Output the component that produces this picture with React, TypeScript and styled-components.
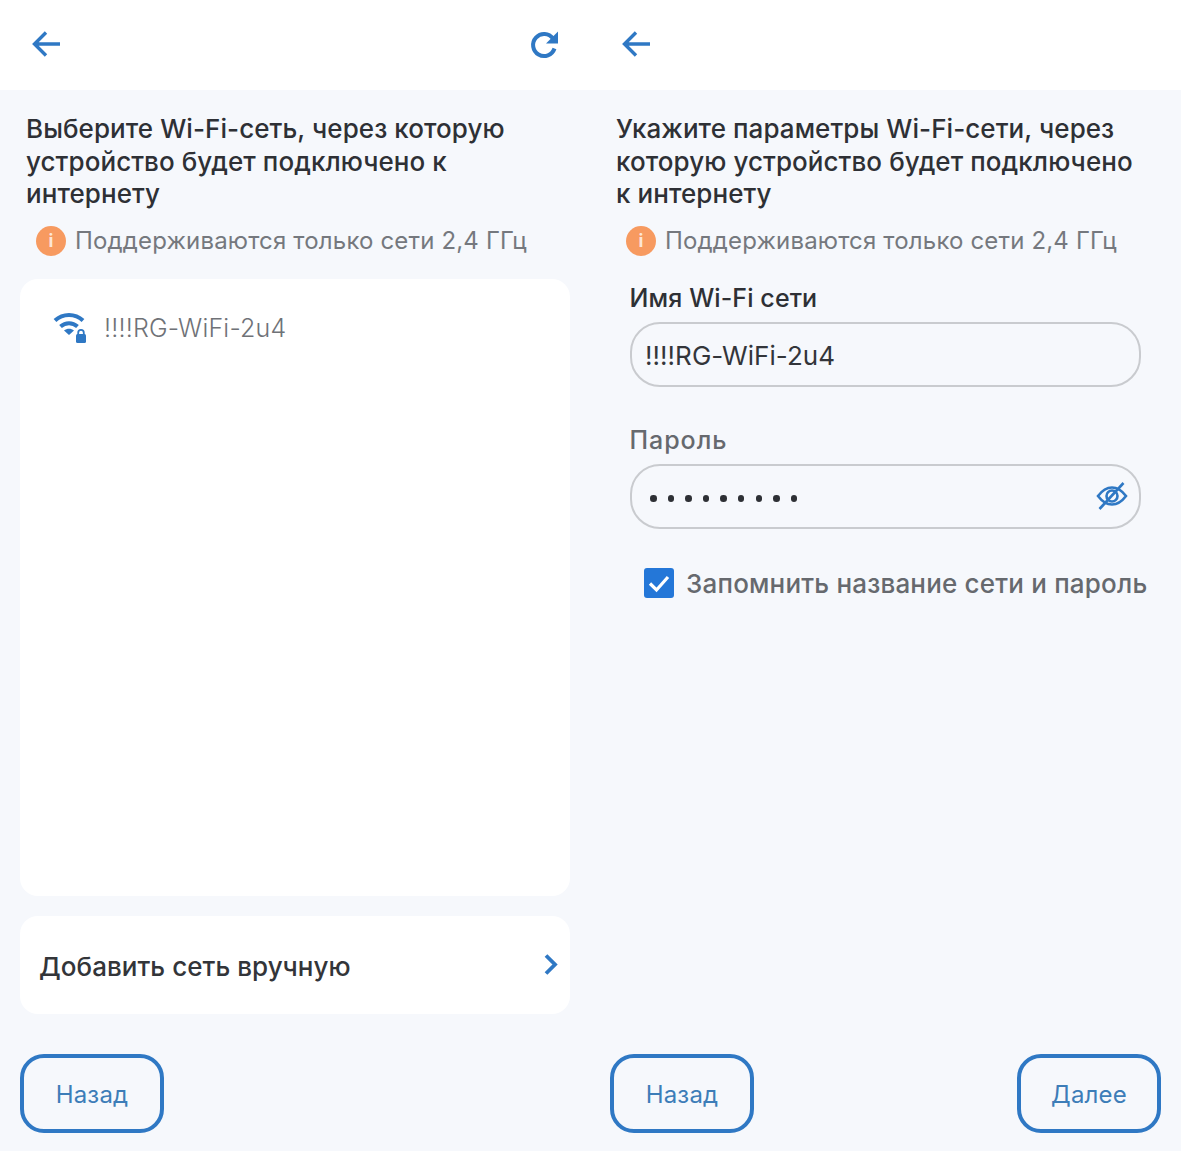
import React from 'react';
import styled, { createGlobalStyle } from 'styled-components';

const Global = createGlobalStyle`
  html, body { margin: 0; padding: 0; background: #f6f8fc; }
  body { font-family: Inter, "Noto Sans", sans-serif; }
  * { box-sizing: border-box; }
`;
const Page = styled.div`display: grid; grid-template-columns: 590px 591px; width: 1181px; height: 1151px; overflow: hidden;`;
const Panel = styled.section`display: flex; flex-direction: column; height: 1151px; background: #f6f8fc;`;
const Header = styled.header`display: flex; align-items: center; justify-content: space-between; height: 90px; padding: 0 30px 1px 31px; background: #fff; color: #2f78c4;`;
const Body = styled.div`flex: 1; display: flex; flex-direction: column; padding: 23px 20px 18px 20px; min-height: 0;`;
const Title = styled.h1`margin: 0 0 0 6px; font-size: 26px; line-height: 32.5px; font-weight: 500; letter-spacing: 0.07px; color: #2e3035;`;
const Note = styled.div`display: flex; align-items: center; gap: 9px; margin: 14px 0 0 16px; height: 32px; font-size: 24px; letter-spacing: 0.16px; color: #75787e;`;
const InfoDot = styled.span`flex: none; width: 30px; height: 30px; border-radius: 50%; background: #f79a60; color: #fde6d6; display: flex; align-items: center; justify-content: center; font-size: 18px; font-weight: 700;`;
const ListCard = styled.div`flex: 1; margin-top: 22px; background: #fff; border-radius: 18px; padding: 31px 0 0 32px;`;
const NetRow = styled.div`display: flex; align-items: center; gap: 16px; height: 36px; font-size: 25px; font-weight: 300; letter-spacing: 0.2px; color: #6f7277;`;
const ManualCard = styled.div`display: flex; align-items: center; justify-content: space-between; height: 98px; margin-top: 20px; padding: 0 9px 0 19px; background: #fff; border-radius: 18px; color: #2f78c4;`;
const ManualText = styled.span`padding-top: 2px; font-size: 26px; font-weight: 500; letter-spacing: 0.05px; color: #333539;`;
const Footer = styled.div`display: flex; justify-content: space-between; margin-top: 40px;`;
const OutlineButton = styled.button`width: 144px; height: 79px; border: 4px solid #2f78c4; border-radius: 24px; background: transparent; color: #3d7db8; font-family: inherit; font-size: 24px; letter-spacing: 0.2px; padding: 2px 0 0;`;
const Spacer = styled.div`flex: 1;`;
const Field = styled.div<{ $top: number }>`display: flex; flex-direction: column; margin: ${p => p.$top}px 0 0 19.500px; width: 511.500px;`;
const Label = styled.label<{ $strong?: boolean }>`font-size: 25px; line-height: 32px; letter-spacing: ${p => (p.$strong ? '0.1px' : '0.95px')}; font-weight: 500; color: ${p => (p.$strong ? '#2e3035' : '#66696e')};`;
const InputBox = styled.div`display: flex; align-items: center; justify-content: space-between; height: 65px; margin-top: 8px; padding: 3px 11px 0 13.500px; border: 2px solid #c9cbcf; border-radius: 30px; font-size: 26px; letter-spacing: 0.05px; color: #33353a;`;
const Dots = styled.span`display: flex; gap: 11.100px; padding: 2px 0 0 5px;`;
const Dot = styled.i`display: block; width: 6.500px; height: 6.500px; border-radius: 50%; background: #2e3035;`;
const Eye = styled.span`display: flex; margin-top: -3px;`;
const Remember = styled.div`display: flex; align-items: center; gap: 12px; margin: 39px 0 0 34px; font-size: 26px; font-weight: 500; letter-spacing: 0.19px; color: #66696e; white-space: nowrap;`;
const Check = styled.span`flex: none; width: 30px; height: 30px; border-radius: 3px; background: #2477d8; display: flex; align-items: center; justify-content: center;`;

const Arrow = () => (
  <svg width="30" height="30" viewBox="0 0 30 30" fill="none" stroke="currentColor" strokeWidth="3.400">
    <path d="M4 14h25M15 2.500 3.500 14 15 25.500" />
  </svg>
);
const Refresh = () => (
  <svg width="30" height="30" viewBox="0 0 30 30" fill="none">
    <path d="M24.500 18.500a11 11 0 1 1-1.500-10" stroke="currentColor" strokeWidth="4" />
    <path d="M28 1.500v12H16z" fill="currentColor" />
  </svg>
);
const Wifi = () => (
  <svg width="36" height="36" viewBox="0 0 36 36" fill="none" style={{ flex: 'none', marginTop: -2 }}>
    <path d="M3 11.500c8-7.500 20-7.500 28 0" stroke="#2f78c4" strokeWidth="4" />
    <path d="M8.500 17.500c5-4.500 12-4.500 17 0" stroke="#2f78c4" strokeWidth="4" />
    <path d="M12 21.500c3-2.300 7-2.300 10 0l-5 4.500z" fill="#2f78c4" />
    <rect x="24" y="25" width="10" height="9" rx="1.500" fill="#2f78c4" />
    <path d="M26.200 26v-2.300a2.800 2.800 0 0 1 5.600 0V26" stroke="#2f78c4" strokeWidth="1.800" />
  </svg>
);
const Chevron = () => (
  <svg width="20" height="26" viewBox="0 0 20 26" fill="none" stroke="currentColor" strokeWidth="3.800">
    <path d="M5 3.500 14 12.500 5 21.500" />
  </svg>
);
const EyeOff = () => (
  <svg width="32" height="30" viewBox="0 0 32 30" fill="none" stroke="#2f78c4" strokeWidth="2.600">
    <path d="M2 15C6.500 9 11 6.500 16 6.500S25.500 9 30 15C25.500 21 21 23.500 16 23.500S6.500 21 2 15Z" />
    <circle cx="16" cy="15" r="5.500" />
    <path d="M27.500 2 3.500 28" />
  </svg>
);
const Tick = () => (
  <svg width="24" height="24" viewBox="0 0 24 24" fill="none" stroke="#fff" strokeWidth="3.200">
    <path d="M3 12.500 9.500 19 21 6" />
  </svg>
);
const Note24 = () => (
  <Note><InfoDot>i</InfoDot>Поддерживаются только сети 2,4 ГГц</Note>
);

export default function App() {
  return (
    <Page>
      <Global />
      <Panel>
        <Header><Arrow /><Refresh /></Header>
        <Body>
          <Title>Выберите Wi-Fi-сеть, через которую<br />устройство будет подключено к<br />интернету</Title>
          <Note24 />
          <ListCard><NetRow><Wifi />!!!!RG-WiFi-2u4</NetRow></ListCard>
          <ManualCard><ManualText>Добавить сеть вручную</ManualText><Chevron /></ManualCard>
          <Footer><OutlineButton>Назад</OutlineButton></Footer>
        </Body>
      </Panel>
      <Panel>
        <Header><Arrow /></Header>
        <Body>
          <Title>Укажите параметры Wi-Fi-сети, через<br />которую устройство будет подключено<br />к интернету</Title>
          <Note24 />
          <Field $top={25}>
            <Label $strong>Имя Wi-Fi сети</Label>
            <InputBox>!!!!RG-WiFi-2u4</InputBox>
          </Field>
          <Field $top={37}>
            <Label>Пароль</Label>
            <InputBox>
              <Dots>{Array.from({ length: 9 }, (_, i) => <Dot key={i} />)}</Dots>
              <Eye><EyeOff /></Eye>
            </InputBox>
          </Field>
          <Remember><Check><Tick /></Check>Запомнить название сети и пароль</Remember>
          <Spacer />
          <Footer><OutlineButton>Назад</OutlineButton><OutlineButton>Далее</OutlineButton></Footer>
        </Body>
      </Panel>
    </Page>
  );
}
